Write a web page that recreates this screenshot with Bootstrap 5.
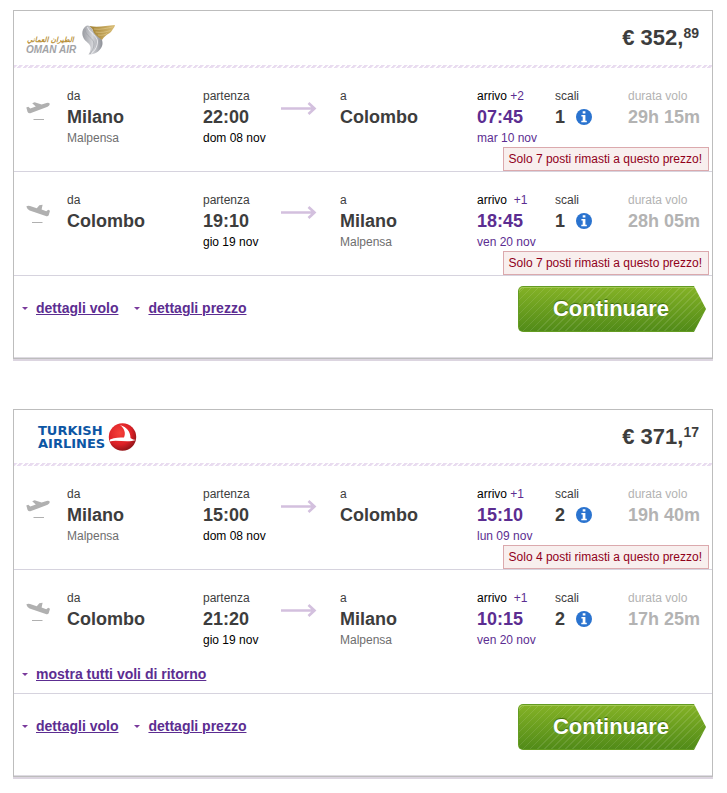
<!DOCTYPE html>
<html lang="it">
<head>
<meta charset="utf-8">
<meta name="viewport" content="width=device-width, initial-scale=1">
<title>Voli Milano – Colombo</title>
<link rel="stylesheet" href="https://cdn.jsdelivr.net/npm/bootstrap@5.3.0/dist/css/bootstrap.min.css">
<style>
  body { font-family: "Liberation Sans", Arial, sans-serif; font-size: 12px; line-height: 16px; color: #3d3d3d; background: #fff; }
  main { padding: 10px 14px 12px 13px; }
  .offer { border: 1px solid #bdbdbd; box-shadow: 0 2px 0 #dcd5e0; }
  .offer + .offer { margin-top: 50px; }
  .offer-head { padding-right: 13px; }
  .stripes { height: 3px; background: repeating-linear-gradient(135deg, #e9dcf0 0 2px, #fff 3px 4px); }
  .price { font-size: 22px; line-height: 26px; font-weight: bold; }
  .price sup { font-size: 14px; line-height: 14px; top: -7px; vertical-align: baseline; }
  .leg { border-bottom: 1px solid #d6d3de; padding-top: 20px; }
  .leg-grid { display: grid; grid-template-columns: 53px 136fr 78fr 59fr 137fr 78fr 73fr 84fr; }
  .plane { margin: 12px 0 0 12px; }
  .arrow { margin-top: 14px; }
  .big { font-size: 18px; line-height: 26px; font-weight: bold; }
  .stops { gap: 11px; }
  .violet { color: #5c2d91; }
  .ink { color: #000; }
  .soft { color: #6e6e6e; }
  .pale { color: #b3b3b3; }
  .seats { margin: 1px 3px 0 0; padding: 0 6px 0 5px; line-height: 22px; border: 1px solid #dba9ad; background: #f8efee; color: #90001a; }
  .toggles { column-gap: 16px; padding-left: 8px; font-size: 14px; line-height: 20px; font-weight: bold; }
  .toggles a { color: #5c2d91; display: inline-flex; align-items: center; gap: 8px; text-decoration: none; }
  .toggles a span { text-decoration: underline; }
  .toggles a::before { content: ""; border: 3px solid transparent; border-top-color: #7a3a9c; border-bottom: 0; }
  .all-returns { padding-top: 16px; padding-bottom: 9px; }
  .offer-foot { padding: 10px 6px 25px 0; border-bottom: 1px solid #dedbe2; }
  .offer-foot .toggles { padding-bottom: 2px; }
  .go { width: 188px; height: 46px; padding: 0 8px 0 6px; border: 0; border-radius: 5px 0 0 5px; color: #fff; font-size: 22px; line-height: 26px; font-weight: bold;
    text-shadow: 0 -1px 1px #3c6a0c;
    background: repeating-linear-gradient(135deg, rgba(255,255,255,.1) 0 1px, transparent 1px 5px), linear-gradient(#85b326, #508a18);
    box-shadow: inset 0 0 0 1px #649c22, inset 1px 2px 0 #a3c853;
    clip-path: polygon(0 0, calc(100% - 12px) 0, 100% 50%, calc(100% - 12px) 100%, 0 100%); }
</style>
<script src="https://cdn.jsdelivr.net/npm/bootstrap@5.3.0/dist/js/bootstrap.bundle.min.js"></script>
</head>
<body>
<svg class="d-none" aria-hidden="true">
  <symbol id="takeoff" viewBox="0 0 25 20">
    <path fill="#b0b0b0" d="M.3 7.500 2.300 6.800 4.300 8.500 9.800 6.600 6.200 3.200 8.600 2.200 15.600 4.600 20.600 2.900Q23.400 2.400 23.800 4 23.600 5.800 21.600 6.800L5 13.100Q2.600 13.800 1.600 12Z"/>
    <path stroke="#b0b0b0" d="M7.500 19.500h10.500"/>
  </symbol>
  <symbol id="landing" viewBox="0 0 25 20">
    <path fill="#b0b0b0" d="M.3 2.600Q1.800 1.400 4 2L10.800 4.200 13.300 1.300 16.600 .800 15.600 5.600 20.300 7.200 22.200 5.800 24 6.700 22.700 11.300Q21.800 12.600 19.800 12L3.600 6.400Q1 5.200 .3 2.600Z"/>
    <path stroke="#b0b0b0" d="M6 18.500h10.500"/>
  </symbol>
  <symbol id="arrow" viewBox="0 0 36 13">
    <path fill="none" stroke="#d3c0de" stroke-width="2.600" d="M0 6.500h33.500M27.500 1l6 5.500-6 5.500"/>
  </symbol>
  <symbol id="info" viewBox="0 0 16 16">
    <circle cx="8" cy="8" r="8" fill="#2a73cf"/>
    <path fill="#fff" d="M6.700 2.200h2.700v2.400H6.700zM5.400 6h4v5.800h1.400v1.500H5.300v-1.500h1.400V7.500H5.400z"/>
  </symbol>
</svg>

<main>
  <article class="offer">
    <header>
      <div class="offer-head d-flex justify-content-between align-items-center">
        <svg width="110" height="54" viewBox="0 0 110 54" role="img" aria-label="Oman Air">
          <defs>
            <linearGradient id="silver"><stop offset="0" stop-color="#999ba1"/><stop offset=".5" stop-color="#d3d4d8"/><stop offset="1" stop-color="#8d9097"/></linearGradient>
            <linearGradient id="gold"><stop offset="0" stop-color="#a18030"/><stop offset="1" stop-color="#d9bd76"/></linearGradient>
          </defs>
          <text x="13" y="31" font-family="DejaVu Sans, sans-serif" font-size="7" font-weight="bold" font-style="italic" fill="#b88f35">الطيران العماني</text>
          <text x="12" y="42" font-size="10" font-weight="bold" font-style="italic" fill="#a2a3a6">OMAN AIR</text>
          <path fill="url(#silver)" d="M73 14.500C68 17 67 23 70 28 72 31 75.500 32 76.500 36 77 39 76 41 74.500 43.500 81 44 88 39 88.500 33 89 27 85 25 82 22 79.500 19 79 15 73 14.500Z"/>
          <path fill="none" stroke="#f4f4f6" stroke-width=".8" d="M73.500 16C75 22 84 25 83.500 31 83 37 80.500 40 77 42.500"/>
          <path fill="none" stroke="#9b9da3" stroke-width=".6" d="M71 18C71 25 80 27 80 33 80 37 78 40 76 43M76.500 17C79 23 86 26 86 31"/>
          <path fill="url(#gold)" d="M75.500 15C84 17 92 14.500 101 14 100.500 17 98.500 18 98 19.500 97 22 94 22.500 92 24.500 90.500 26 89 27 88 29 84 26 79.500 23 78.500 18Z"/>
          <path fill="none" stroke="#e3cd94" stroke-width=".6" d="M80 18C87 19 93 17 99 16M81.500 21C87 22 92 21 96.500 19.500M84 24C88 24.500 91 24 93 22.500"/>
        </svg>
        <div class="price">€ 352,<sup>89</sup></div>
      </div>
      <div class="stripes"></div>
    </header>

    <section class="leg">
      <div class="leg-grid">
        <svg class="plane" width="25" height="20" aria-hidden="true"><use href="#takeoff"/></svg>
        <div>da<div class="big">Milano</div><div class="soft">Malpensa</div></div>
        <div>partenza<div class="big">22:00</div><div class="ink">dom 08 nov</div></div>
        <svg class="arrow" width="36" height="13" aria-hidden="true"><use href="#arrow"/></svg>
        <div>a<div class="big">Colombo</div></div>
        <div class="violet"><span class="ink">arrivo</span> +2<div class="big">07:45</div>mar 10 nov</div>
        <div>scali<div class="big stops d-flex align-items-center"><span>1</span><svg width="16" height="16" role="img" aria-label="Informazioni"><use href="#info"/></svg></div></div>
        <div class="pale">durata volo<div class="big">29h 15m</div></div>
      </div>
      <div class="d-flex justify-content-end"><div class="seats">Solo 7 posti rimasti a questo prezzo!</div></div>
    </section>

    <section class="leg">
      <div class="leg-grid">
        <svg class="plane" width="25" height="20" aria-hidden="true"><use href="#landing"/></svg>
        <div>da<div class="big">Colombo</div></div>
        <div>partenza<div class="big">19:10</div><div class="ink">gio 19 nov</div></div>
        <svg class="arrow" width="36" height="13" aria-hidden="true"><use href="#arrow"/></svg>
        <div>a<div class="big">Milano</div><div class="soft">Malpensa</div></div>
        <div class="violet"><span class="ink">arrivo</span>&nbsp; +1<div class="big">18:45</div>ven 20 nov</div>
        <div>scali<div class="big stops d-flex align-items-center"><span>1</span><svg width="16" height="16" role="img" aria-label="Informazioni"><use href="#info"/></svg></div></div>
        <div class="pale">durata volo<div class="big">28h 05m</div></div>
      </div>
      <div class="d-flex justify-content-end"><div class="seats">Solo 7 posti rimasti a questo prezzo!</div></div>
    </section>

    <footer class="offer-foot d-flex justify-content-between align-items-center">
      <nav class="toggles d-flex flex-wrap" aria-label="Dettagli"><a href="#volo"><span>dettagli volo</span></a><a href="#prezzo"><span>dettagli prezzo</span></a></nav>
      <button type="button" class="go">Continuare</button>
    </footer>
  </article>

  <article class="offer">
    <header>
      <div class="offer-head d-flex justify-content-between align-items-center">
        <svg width="126" height="53" viewBox="0 0 126 53" role="img" aria-label="Turkish Airlines">
          <defs><radialGradient id="red" cx=".4" cy=".35" r=".65"><stop offset="0" stop-color="#f5413a"/><stop offset=".65" stop-color="#dd2127"/><stop offset="1" stop-color="#98161a"/></radialGradient></defs>
          <g font-family="DejaVu Sans, sans-serif" font-weight="bold" font-size="13" fill="#0c56a4">
            <text x="24" y="25">TURKISH</text>
            <text x="24" y="38">AIRLINES</text>
          </g>
          <circle cx="108.500" cy="27" r="13.700" fill="url(#red)"/>
          <path fill="#fff" d="M106 15C113 17 116.500 22 116.500 28 118 29 120 30 122 30 114 33 103 29.500 95.500 31.500L96 29.500C101 27.500 106 27.500 110 27.500 112 23 110.500 18.500 106 15Z"/>
        </svg>
        <div class="price">€ 371,<sup>17</sup></div>
      </div>
      <div class="stripes"></div>
    </header>

    <section class="leg">
      <div class="leg-grid">
        <svg class="plane" width="25" height="20" aria-hidden="true"><use href="#takeoff"/></svg>
        <div>da<div class="big">Milano</div><div class="soft">Malpensa</div></div>
        <div>partenza<div class="big">15:00</div><div class="ink">dom 08 nov</div></div>
        <svg class="arrow" width="36" height="13" aria-hidden="true"><use href="#arrow"/></svg>
        <div>a<div class="big">Colombo</div></div>
        <div class="violet"><span class="ink">arrivo</span> +1<div class="big">15:10</div>lun 09 nov</div>
        <div>scali<div class="big stops d-flex align-items-center"><span>2</span><svg width="16" height="16" role="img" aria-label="Informazioni"><use href="#info"/></svg></div></div>
        <div class="pale">durata volo<div class="big">19h 40m</div></div>
      </div>
      <div class="d-flex justify-content-end"><div class="seats">Solo 4 posti rimasti a questo prezzo!</div></div>
    </section>

    <section class="leg">
      <div class="leg-grid">
        <svg class="plane" width="25" height="20" aria-hidden="true"><use href="#landing"/></svg>
        <div>da<div class="big">Colombo</div></div>
        <div>partenza<div class="big">21:20</div><div class="ink">gio 19 nov</div></div>
        <svg class="arrow" width="36" height="13" aria-hidden="true"><use href="#arrow"/></svg>
        <div>a<div class="big">Milano</div><div class="soft">Malpensa</div></div>
        <div class="violet"><span class="ink">arrivo</span>&nbsp; +1<div class="big">10:15</div>ven 20 nov</div>
        <div>scali<div class="big stops d-flex align-items-center"><span>2</span><svg width="16" height="16" role="img" aria-label="Informazioni"><use href="#info"/></svg></div></div>
        <div class="pale">durata volo<div class="big">17h 25m</div></div>
      </div>
      <div class="toggles all-returns d-flex"><a href="#ritorno"><span>mostra tutti voli di ritorno</span></a></div>
    </section>

    <footer class="offer-foot d-flex justify-content-between align-items-center">
      <nav class="toggles d-flex flex-wrap" aria-label="Dettagli"><a href="#volo"><span>dettagli volo</span></a><a href="#prezzo"><span>dettagli prezzo</span></a></nav>
      <button type="button" class="go">Continuare</button>
    </footer>
  </article>
</main>
</body>
</html>
